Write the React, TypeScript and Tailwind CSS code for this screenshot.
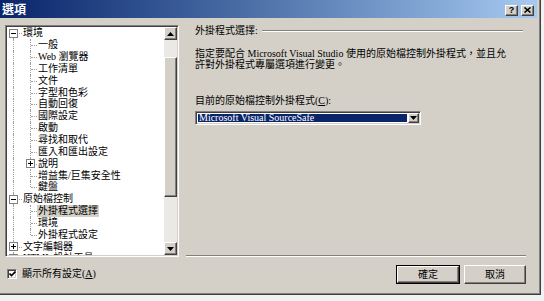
import React from "react";

const FONT = "font-['Liberation_Serif','Noto_Sans_CJK_TC',serif]";

type Item = { t: string; l: number; b?: "+" | "-"; last?: boolean; sel?: boolean };

const items: Item[] = [
  { t: "環境", l: 0, b: "-" },
  { t: "一般", l: 1 },
  { t: "Web 瀏覽器", l: 1 },
  { t: "工作清單", l: 1 },
  { t: "文件", l: 1 },
  { t: "字型和色彩", l: 1 },
  { t: "自動回復", l: 1 },
  { t: "國際設定", l: 1 },
  { t: "啟動", l: 1 },
  { t: "尋找和取代", l: 1 },
  { t: "匯入和匯出設定", l: 1 },
  { t: "說明", l: 1, b: "+" },
  { t: "增益集/巨集安全性", l: 1 },
  { t: "鍵盤", l: 1, last: true },
  { t: "原始檔控制", l: 0, b: "-" },
  { t: "外掛程式選擇", l: 1, sel: true },
  { t: "環境", l: 1 },
  { t: "外掛程式設定", l: 1, last: true },
  { t: "文字編輯器", l: 0, b: "+" },
  { t: "HTML 設計工具", l: 0, b: "+" },
];

function ExpandBox({ sign, left }: { sign: "+" | "-"; left: string }) {
  return (
    <span className={`absolute top-[1.5px] ${left} w-[9px] h-[9px] border border-[#808080] bg-white`}>
      <span className="absolute left-[1px] top-[3px] w-[5px] h-px bg-black" />
      {sign === "+" && <span className="absolute left-[3px] top-[1px] w-px h-[5px] bg-black" />}
    </span>
  );
}

function TreeRow({ it, i }: { it: Item; i: number }) {
  return (
    <div className="relative h-[11.85px] flex items-center">
      {/* root level line */}
      <span
        className={`absolute left-[6px] bottom-0 border-l border-dotted border-[#a0a0a0] ${i === 0 ? "top-1/2" : "top-0"}`}
      />
      {it.l === 0 && <span className="absolute left-[7px] w-[8px] top-1/2 border-t border-dotted border-[#a0a0a0]" />}
      {it.l === 1 && (
        <>
          <span
            className={`absolute left-[23px] top-0 border-l border-dotted border-[#a0a0a0] ${it.last ? "h-1/2" : "bottom-0"}`}
          />
          <span className="absolute left-[24px] w-[6px] top-1/2 border-t border-dotted border-[#a0a0a0]" />
        </>
      )}
      {it.b && <ExpandBox sign={it.b} left={it.l === 0 ? "left-[2px]" : "left-[19px]"} />}
      <span
        className={`relative whitespace-nowrap text-[10px] leading-[12px] text-black ${it.l === 0 ? "ml-[16px]" : it.sel ? "ml-[30px] px-px bg-[#d4d0c8]" : "ml-[31px]"}`}
      >
        {it.t}
      </span>
    </div>
  );
}

function Arrow({ up }: { up?: boolean }) {
  return (
    <svg width="7" height="4" viewBox="0 0 7 4">
      {up ? <polygon points="0,4 7,4 3.5,0" fill="#000" /> : <polygon points="0,0 7,0 3.5,4" fill="#000" />}
    </svg>
  );
}

const raised =
  "bg-[#d4d0c8] border border-t-white border-l-white border-r-[#404040] border-b-[#404040] shadow-[inset_-1px_-1px_#808080]";
const sunken =
  "border border-t-[#808080] border-l-[#808080] border-r-white border-b-white shadow-[inset_1px_1px_#404040,inset_-1px_-1px_#d4d0c8]";

export default function App() {
  return (
    <div className={`w-[544px] h-[301px] bg-[#f2f2f2] overflow-hidden ${FONT}`}>
      <div className="w-[541px] h-[295px] border-r border-b border-[#404040]">
        <div className="h-full bg-[#d4d0c8] border-r border-b border-[#808080] pr-[2px] flex flex-col">
          {/* title bar */}
          <div className="h-[20px] shrink-0 bg-gradient-to-r from-[#0a246a] to-[#a6caf0] flex items-center pl-[2px] pr-[3px] pt-[2px] border-b-2 border-[#d4d0c8]">
            <span className="text-white font-bold text-[12px] leading-[14px]">選項</span>
            <div className="ml-auto flex gap-[3px] items-center">
              <div className={`w-[13px] h-[11px] ${raised} flex items-center justify-center`}>
                <span className="text-[9px] leading-none font-bold font-['Liberation_Sans',sans-serif]">?</span>
              </div>
              <div className={`w-[13px] h-[11px] ${raised} flex items-center justify-center`}>
                <svg width="7" height="6" viewBox="0 0 7 6">
                  <path d="M0.5 0.5 L6.5 5.5 M6.5 0.5 L0.5 5.5" stroke="#000" strokeWidth="1.6" />
                </svg>
              </div>
            </div>
          </div>

          {/* body */}
          <div className="flex flex-1 min-h-0">
            {/* left */}
            <div className="w-[186px] shrink-0 pl-[5px] pt-[5px]">
              <div className={`w-[174px] h-[232px] bg-white flex ${sunken} p-px`}>
                <div className="flex-1 overflow-hidden pt-[0.5px]">
                  {items.map((it, i) => (
                    <TreeRow key={i} it={it} i={i} />
                  ))}
                </div>
                <div className="w-[13px] flex flex-col">
                  <div className={`h-[13px] ${raised} flex items-center justify-center`}>
                    <Arrow up />
                  </div>
                  <div className="h-[17px] bg-[#ebe9e5]" />
                  <div className={`h-[140px] ${raised}`} />
                  <div className="flex-1 bg-[#ebe9e5]" />
                  <div className={`h-[13px] ${raised} flex items-center justify-center`}>
                    <Arrow />
                  </div>
                </div>
              </div>
              <div className="mt-[11px] h-[12px] flex items-center pl-[2px]">
                <div className={`w-[10px] h-[10px] bg-white ${sunken} flex items-center justify-center`}>
                  <svg width="7" height="6" viewBox="0 0 7 6">
                    <polyline points="0.5,2.5 2.5,4.5 6.5,0.5" fill="none" stroke="#000" strokeWidth="1.6" />
                  </svg>
                </div>
                <span className="ml-[5px] text-[10px] leading-[12px] text-black">
                  顯示所有設定(<span className="underline">A</span>)
                </span>
              </div>
            </div>

            {/* right */}
            <div className="flex-1 flex flex-col pl-[9px] pr-[11px]">
              <div className="mt-[5px] h-[12px] flex items-center">
                <span className="text-[10px] leading-[12px] text-black whitespace-nowrap">外掛程式選擇:</span>
                <div className="ml-[4px] flex-1 h-[2px] border-t border-[#808080] border-b border-b-white mr-[3px]" />
              </div>
              <p className="mt-[12px] text-[10px] leading-[10.5px] text-black whitespace-nowrap">
                指定要配合 Microsoft Visual Studio 使用的原始檔控制外掛程式，並且允
                <br />
                許對外掛程式專屬選項進行變更。
              </p>
              <div className="mt-[25px] h-[12px] text-[10px] leading-[12px] text-black">
                目前的原始檔控制外掛程式(<span className="underline">C</span>):
              </div>
              <div className={`mt-[4px] w-[226px] h-[14px] bg-white ${sunken} flex p-px`}>
                <div className="flex-1 m-px bg-[#0a246a] flex items-center pl-px">
                  <span className="text-white text-[10px] leading-[10px] whitespace-nowrap">Microsoft Visual SourceSafe</span>
                </div>
                <div className={`w-[11px] ${raised} flex items-center justify-center`}>
                  <Arrow />
                </div>
              </div>

              <div className="flex-1" />
              <div className="h-[2px] border-t border-[#808080] border-b border-b-white -ml-[9px]" />
              <div className="mt-[8px] mb-[9px] flex justify-end gap-[4px]">
                <div className="w-[64px] h-[19px] border border-black">
                  <div className={`w-full h-full ${raised} flex items-center justify-center`}>
                    <span className="text-[10px] leading-none text-black">確定</span>
                  </div>
                </div>
                <div className={`w-[62px] h-[19px] ${raised} flex items-center justify-center`}>
                  <span className="text-[10px] leading-none text-black">取消</span>
                </div>
              </div>
            </div>
          </div>
        </div>
      </div>
    </div>
  );
}
